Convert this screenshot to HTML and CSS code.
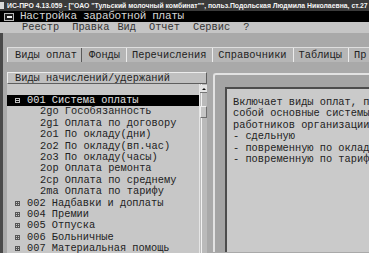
FILE: index.html
```html
<!DOCTYPE html>
<html lang="ru">
<head>
    <meta charset="UTF-8">
    <title>Настройка заработной платы</title>
    <link rel="stylesheet" href="styles.css">
</head>
<body>
    <div class="titlebar"><span class="app-icon"></span>ИС-ПРО 4.13.059 - ["ОАО "Тульский молочный комбинат"", польз.Подольская Людмила Николаевна, ст.27</div>

    <div class="docbar"><span class="sysmenu"></span>Настройка заработной платы</div>

    <div class="menubar">
        <span>Реестр</span>
        <span>Правка</span>
        <span class="menu-tight">Вид</span>
        <span>Отчет</span>
        <span>Сервис</span>
        <span>?</span>
    </div>

    <div class="workspace">
        <div class="tabs">
            <div class="tab active">Виды оплат</div>
            <div class="tab">Фонды</div>
            <div class="tab">Перечисления</div>
            <div class="tab">Справочники</div>
            <div class="tab">Таблицы</div>
            <div class="tab">Пр</div>
        </div>

        <div class="tabpage">
            <div class="leftpane">
                <div class="pane-head">Виды начислений/удержаний</div>
                <div class="list-body">
                    <div class="list">
                        <div class="filter-row"></div>
                        <div class="row group selected"><span class="node minus"></span>001 Система оплаты</div>
                        <div class="row child">2go Гособязанность</div>
                        <div class="row child">2g1 Оплата по договору</div>
                        <div class="row child">2o1 По окладу(дни)</div>
                        <div class="row child">2o2 По окладу(вп.час)</div>
                        <div class="row child">2o3 По окладу(часы)</div>
                        <div class="row child">2op Оплата ремонта</div>
                        <div class="row child">2cp Оплата по среднему</div>
                        <div class="row child">2ma Оплата по тарифу</div>
                        <div class="row group"><span class="node plus"></span>002 Надбавки и доплаты</div>
                        <div class="row group"><span class="node plus"></span>004 Премии</div>
                        <div class="row group"><span class="node plus"></span>005 Отпуска</div>
                        <div class="row group"><span class="node plus"></span>006 Больничные</div>
                        <div class="row group"><span class="node plus"></span>007 Материальная помощь</div>
                    </div>
                    <div class="scrollbar">
                        <div class="scroll-btn"></div>
                        <div class="scroll-track"></div>
                        <div class="scroll-thumb"></div>
                    </div>
                </div>
            </div>

            <div class="rightpane">
                <div class="desc">
                    <p>Включает виды оплат, представляющих</p>
                    <p>собой основные системы оплаты труда</p>
                    <p>работников организации:</p>
                    <p>- сдельную</p>
                    <p>- повременную по окладу</p>
                    <p>- повременную по тарифу</p>
                </div>
            </div>
        </div>
    </div>
</body>
</html>
```

FILE: styles.css
```css
body {
    margin: 0;
    width: 369px;
    height: 253px;
    overflow: hidden;
    background: #a9a9a9;
    font-family: "Liberation Mono", "DejaVu Sans Mono", monospace;
    font-size: 10.33px;
    color: #222;
}
/* Application caption */
.titlebar {
    height: 11px;
    background: #3a3a3a;
    color: #f4f4f4;
    font: bold 6.85px/11px "Liberation Sans", Arial, sans-serif;
    white-space: nowrap;
    overflow: hidden;
    display: flex;
    align-items: center;
}
.app-icon {
    width: 4px;
    height: 7px;
    background: #d8d8d8;
    margin-right: 3px;
    flex: none;
}
/* Document caption */
.docbar {
    height: 11px;
    background: #000;
    color: #d6d6d6;
    font-size: 11px;
    letter-spacing: -0.3px;
    line-height: 11px;
    display: flex;
    align-items: center;
    white-space: nowrap;
}
.sysmenu {
    width: 8px;
    height: 6px;
    border: 1px solid #b8b8b8;
    background: #1c1c1c;
    margin: 0 6px 0 4px;
    display: flex;
    align-items: center;
    justify-content: center;
}
.sysmenu::after {
    content: "";
    width: 5px;
    height: 2px;
    background: #f0f0f0;
}
/* Menu */
.menubar {
    height: 11px;
    line-height: 11px;
    background: #c5c5c5;
    color: #333;
    display: flex;
    gap: 13px;
    padding-left: 22px;
}
.menu-tight {
    margin-left: -5px;
}
/* Work area */
.workspace {
    border-left: 3px solid #4a4a4a;
    padding: 14px 0 0 4px;
    height: 206px;
}
.tabs {
    display: flex;
    height: 14px;
    line-height: 14px;
    border-top: 1px solid #dedede;
    background: #b6b6b6;
    white-space: nowrap;
}
.tab {
    padding: 0 6px 0 5px;
    border-right: 1px solid #ececec;
}
.tab.active {
    background: #bebebe;
    padding: 0 4px 0 7px;
    border-left: 1px solid #f0f0f0;
    border-right: 1px solid #5a5a5a;
}
.tab.active + .tab {
    padding-left: 7px;
}
.tabpage {
    display: flex;
    gap: 6px;
    padding-top: 10px;
    height: 180px;
}
/* Left list */
.leftpane {
    width: 200px;
    flex: none;
    display: flex;
    flex-direction: column;
}
.pane-head {
    height: 10px;
    line-height: 10px;
    padding-left: 7px;
    background: #c0c0c0;
    border: 1px solid #ececec;
    border-right-color: #5e5e5e;
    border-bottom-color: #5e5e5e;
    white-space: nowrap;
}
.list-body {
    display: flex;
    flex: 1;
}
.list {
    flex: 1;
    background: #c7c7c7;
    white-space: nowrap;
    overflow: hidden;
}
.filter-row {
    height: 11px;
}
.row {
    height: 11.4px;
    line-height: 11.4px;
    display: flex;
    align-items: center;
    flex: none;
}
.row.group {
    padding-left: 8px;
}
.row.child {
    padding-left: 33px;
}
.row.selected {
    background: #000;
    color: #e2e2e2;
}
.node {
    width: 3px;
    height: 3px;
    border: 1px solid #555;
    background: #c7c7c7;
    margin-right: 7px;
    display: flex;
    align-items: center;
    justify-content: center;
}
.node::after {
    content: "";
    width: 3px;
    height: 1px;
    background: #555;
}
.node.plus {
    background: linear-gradient(#555, #555) center / 1px 3px no-repeat, #c7c7c7;
}
.selected .node {
    border-color: #bdbdbd;
    background: #000;
}
.selected .node::after {
    background: #bdbdbd;
}
/* Scroll bar */
.scrollbar {
    width: 7px;
    border-left: 1px solid #e6e6e6;
    background: linear-gradient(to right, #bcbcbc 1px, #f2f2f2 1px 2px, #bababa 2px);
    display: flex;
    flex-direction: column;
    padding-top: 1px;
}
.scroll-btn {
    height: 7px;
    background: #e4e4e4;
    border-bottom: 1px solid #777;
    display: flex;
    align-items: center;
    justify-content: center;
}
.scroll-btn::after {
    content: "";
    border: 2px solid transparent;
    border-bottom: 2px solid #111;
    border-top: 0;
}
.scroll-track {
    height: 13px;
}
.scroll-thumb {
    height: 10px;
    background: #c6c6c6;
    border: 1px solid #f0f0f0;
    border-right-color: #707070;
    border-bottom-color: #707070;
}
/* Right description */
.rightpane {
    flex: 1;
    margin-top: 1px;
    border-top: 2px solid #e2e2e2;
    border-left: 2px solid #e2e2e2;
    border-top-left-radius: 3px;
    background: #a4a4a4;
    padding: 12px 0 0 10px;
    display: flex;
}
.desc {
    flex: 1;
    background: #cacaca;
    border-top: 2px solid #4c4c4c;
    border-left: 2px solid #4c4c4c;
    padding: 8px 0 0 6px;
    overflow: hidden;
}
.desc p {
    margin: 0;
    line-height: 11.4px;
    white-space: nowrap;
}
```
